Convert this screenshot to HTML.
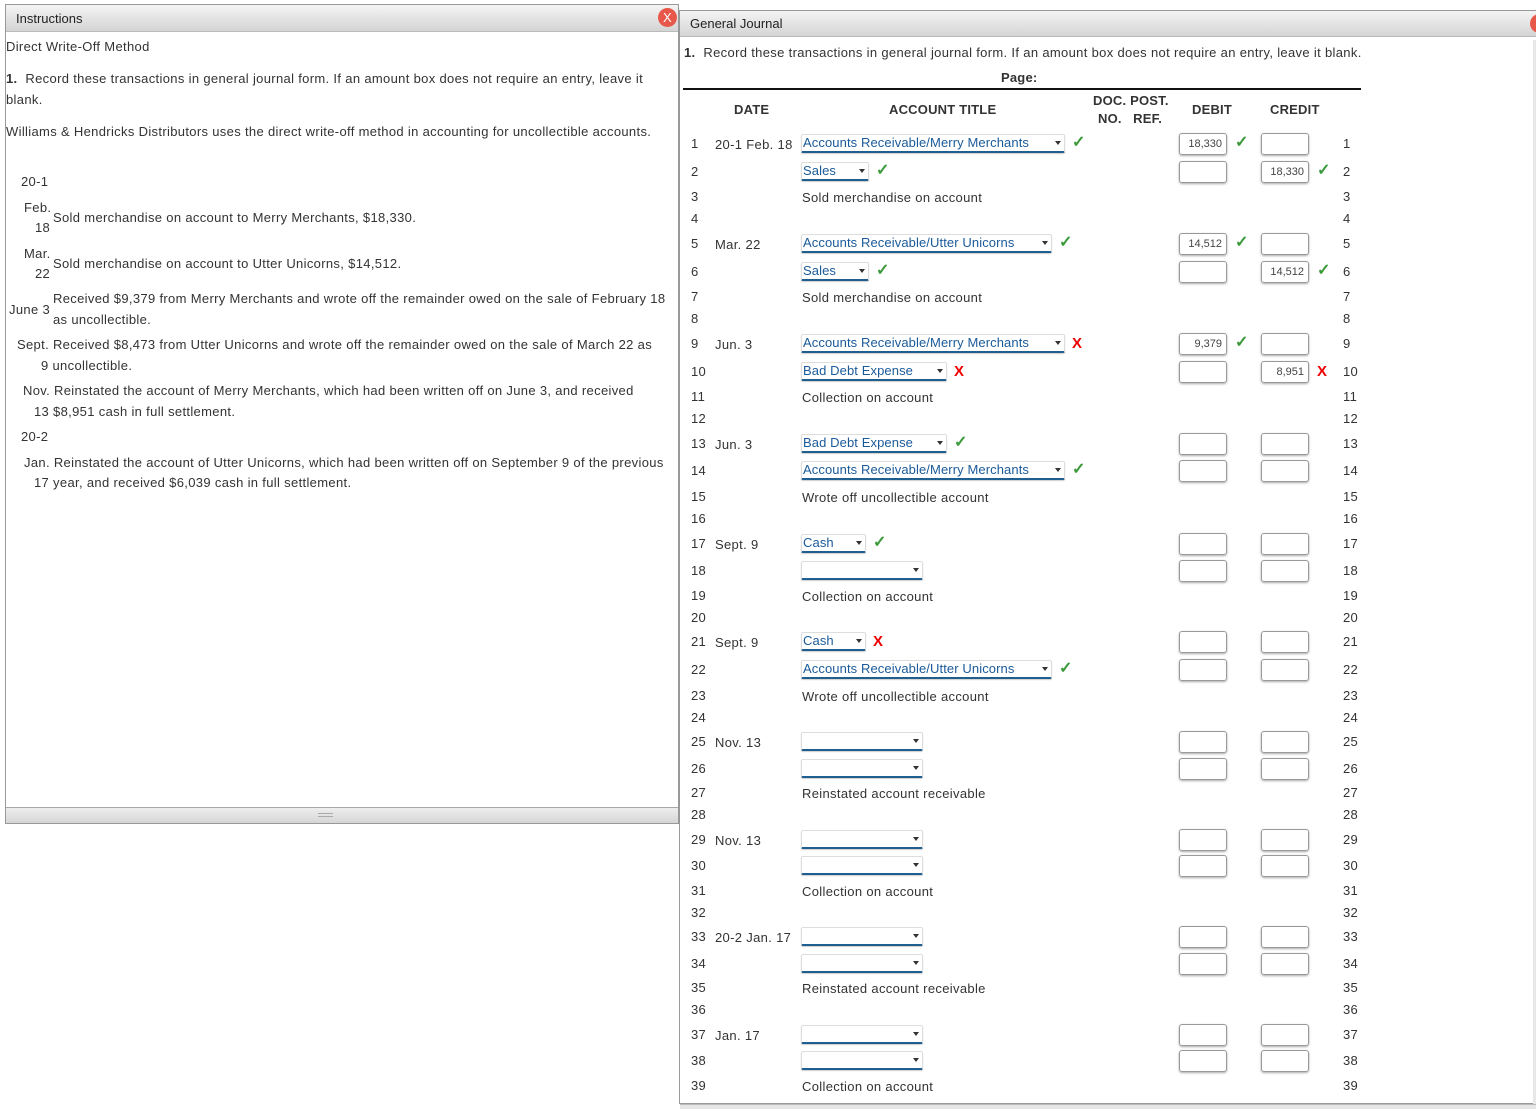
<!DOCTYPE html>
<html><head><meta charset="utf-8"><style>
*{box-sizing:border-box;margin:0;padding:0}
body{width:1536px;height:1109px;background:#fff;position:relative;overflow:hidden;font-family:"Liberation Sans",sans-serif;font-size:13px;color:#333;letter-spacing:0.33px}
.a{position:absolute;white-space:nowrap;line-height:18px}
.hdr{position:absolute;background:linear-gradient(#f4f4f4,#d4d4d4);border-bottom:1px solid #bbb;color:#222;font-size:13px;letter-spacing:0}
.n{position:absolute;left:691px;line-height:18px;top:1px}
.r{position:absolute;left:1343px;line-height:18px}
.d{position:absolute;left:715px;line-height:18px}
.t{position:absolute;left:802px;line-height:18px}
.s{position:absolute;left:801px;height:19px;border:1px solid #ddd;border-bottom:2px solid #1f5f8f;border-radius:2px;color:#1a5a9a;line-height:15px;padding-left:1px;box-shadow:0 1px 1px #ccc;white-space:nowrap;letter-spacing:0.1px}
.s:after{content:"";position:absolute;right:3px;top:6px;border-left:3px solid transparent;border-right:3px solid transparent;border-top:4px solid #333}
.i{position:absolute;width:48px;height:22px;border:1px solid #999;border-radius:3px;box-shadow:0 1px 2px #aaa;font-size:11px;text-align:right;padding-right:4px;line-height:20px;color:#444;letter-spacing:0}
.db{left:1179px}.cr{left:1261px}
.ok{position:absolute;color:#3a9a3a;font-size:16px;font-weight:bold;line-height:18px}
.x{position:absolute;color:#e00;font-size:15px;font-weight:bold;line-height:18px}
.th{position:absolute;font-weight:bold;line-height:18px;color:#333;letter-spacing:0.2px}
</style></head><body>
<div style="position:absolute;left:5px;top:4px;width:674px;height:820px;border:1px solid #999;background:#fff"></div>
<div class="hdr" style="left:6px;top:5px;width:672px;height:27px;padding:6px 10px;line-height:15px">Instructions</div>
<div style="position:absolute;left:658px;top:8px;width:19px;height:19px;border-radius:50%;background:#e8584a;color:#fff;font-size:13px;text-align:center;line-height:19px">X</div>
<div class="hdr" style="left:6px;top:807px;width:672px;height:16px;border-top:1px solid #aaa;border-bottom:none;background:linear-gradient(#eee,#d6d6d6)"></div>
<div style="position:absolute;left:318px;top:813px;width:15px;height:4px;border-top:1px solid #aaa;border-bottom:1px solid #aaa"></div>
<div class="a" style="left:6px;top:38px">Direct Write-Off Method</div>
<div class="a" style="left:6px;top:70px"><b>1.</b>&nbsp; Record these transactions in general journal form. If an amount box does not require an entry, leave it</div>
<div class="a" style="left:6px;top:91px">blank.</div>
<div class="a" style="left:6px;top:123px">Williams &amp; Hendricks Distributors uses the direct write-off method in accounting for uncollectible accounts.</div>
<div class="a" style="left:21px;top:173px">20-1</div>
<div class="a" style="left:24px;top:199px">Feb.</div>
<div class="a" style="left:35px;top:219px">18</div>
<div class="a" style="left:53px;top:209px">Sold merchandise on account to Merry Merchants, $18,330.</div>
<div class="a" style="left:24px;top:245px">Mar.</div>
<div class="a" style="left:35px;top:265px">22</div>
<div class="a" style="left:53px;top:255px">Sold merchandise on account to Utter Unicorns, $14,512.</div>
<div class="a" style="left:9px;top:301px">June 3</div>
<div class="a" style="left:53px;top:290px">Received $9,379 from Merry Merchants and wrote off the remainder owed on the sale of February 18</div>
<div class="a" style="left:53px;top:311px">as uncollectible.</div>
<div class="a" style="left:17px;top:336px">Sept. Received $8,473 from Utter Unicorns and wrote off the remainder owed on the sale of March 22 as</div>
<div class="a" style="left:41px;top:357px">9 uncollectible.</div>
<div class="a" style="left:23px;top:382px">Nov. Reinstated the account of Merry Merchants, which had been written off on June 3, and received</div>
<div class="a" style="left:34px;top:403px">13 $8,951 cash in full settlement.</div>
<div class="a" style="left:21px;top:428px">20-2</div>
<div class="a" style="left:24px;top:454px">Jan. Reinstated the account of Utter Unicorns, which had been written off on September 9 of the previous</div>
<div class="a" style="left:34px;top:474px">17 year, and received $6,039 cash in full settlement.</div>

<div style="position:absolute;left:679px;top:10px;width:860px;height:1094px;border:1px solid #999;background:#fff"></div>
<div class="hdr" style="left:680px;top:11px;width:856px;height:26px;padding:5px 10px;line-height:15px">General Journal</div>
<div style="position:absolute;left:1530px;top:14px;width:19px;height:19px;border-radius:50%;background:#e8584a"></div>
<div style="position:absolute;left:1533px;top:40px;width:3px;height:1064px;background:#e8e8e8"></div>
<div style="position:absolute;left:680px;top:1104px;width:856px;height:5px;background:#e6e6e6;border-top:1px solid #bbb"></div>
<div class="a" style="left:684px;top:44px"><b>1.</b>&nbsp; Record these transactions in general journal form. If an amount box does not require an entry, leave it blank.</div>
<div class="th" style="left:1001px;top:69px">Page:</div>
<div style="position:absolute;left:683px;top:88px;width:678px;height:2px;background:#111"></div>
<div class="th" style="left:734px;top:101px">DATE</div>
<div class="th" style="left:889px;top:101px">ACCOUNT TITLE</div>
<div class="th" style="left:1093px;top:92px">DOC. POST.</div>
<div class="th" style="left:1098px;top:110px">NO.&nbsp;&nbsp; REF.</div>
<div class="th" style="left:1192px;top:101px">DEBIT</div>
<div class="th" style="left:1270px;top:101px">CREDIT</div>

<div class="n" style="top:135px">1</div><div class="r" style="top:135px">1</div>
<div class="n" style="top:163px">2</div><div class="r" style="top:163px">2</div>
<div class="n" style="top:188px">3</div><div class="r" style="top:188px">3</div>
<div class="n" style="top:210px">4</div><div class="r" style="top:210px">4</div>
<div class="n" style="top:235px">5</div><div class="r" style="top:235px">5</div>
<div class="n" style="top:263px">6</div><div class="r" style="top:263px">6</div>
<div class="n" style="top:288px">7</div><div class="r" style="top:288px">7</div>
<div class="n" style="top:310px">8</div><div class="r" style="top:310px">8</div>
<div class="n" style="top:335px">9</div><div class="r" style="top:335px">9</div>
<div class="n" style="top:363px">10</div><div class="r" style="top:363px">10</div>
<div class="n" style="top:388px">11</div><div class="r" style="top:388px">11</div>
<div class="n" style="top:410px">12</div><div class="r" style="top:410px">12</div>
<div class="n" style="top:435px">13</div><div class="r" style="top:435px">13</div>
<div class="n" style="top:462px">14</div><div class="r" style="top:462px">14</div>
<div class="n" style="top:488px">15</div><div class="r" style="top:488px">15</div>
<div class="n" style="top:510px">16</div><div class="r" style="top:510px">16</div>
<div class="n" style="top:535px">17</div><div class="r" style="top:535px">17</div>
<div class="n" style="top:562px">18</div><div class="r" style="top:562px">18</div>
<div class="n" style="top:587px">19</div><div class="r" style="top:587px">19</div>
<div class="n" style="top:609px">20</div><div class="r" style="top:609px">20</div>
<div class="n" style="top:633px">21</div><div class="r" style="top:633px">21</div>
<div class="n" style="top:661px">22</div><div class="r" style="top:661px">22</div>
<div class="n" style="top:687px">23</div><div class="r" style="top:687px">23</div>
<div class="n" style="top:709px">24</div><div class="r" style="top:709px">24</div>
<div class="n" style="top:733px">25</div><div class="r" style="top:733px">25</div>
<div class="n" style="top:760px">26</div><div class="r" style="top:760px">26</div>
<div class="n" style="top:784px">27</div><div class="r" style="top:784px">27</div>
<div class="n" style="top:806px">28</div><div class="r" style="top:806px">28</div>
<div class="n" style="top:831px">29</div><div class="r" style="top:831px">29</div>
<div class="n" style="top:857px">30</div><div class="r" style="top:857px">30</div>
<div class="n" style="top:882px">31</div><div class="r" style="top:882px">31</div>
<div class="n" style="top:904px">32</div><div class="r" style="top:904px">32</div>
<div class="n" style="top:928px">33</div><div class="r" style="top:928px">33</div>
<div class="n" style="top:955px">34</div><div class="r" style="top:955px">34</div>
<div class="n" style="top:979px">35</div><div class="r" style="top:979px">35</div>
<div class="n" style="top:1001px">36</div><div class="r" style="top:1001px">36</div>
<div class="n" style="top:1026px">37</div><div class="r" style="top:1026px">37</div>
<div class="n" style="top:1052px">38</div><div class="r" style="top:1052px">38</div>
<div class="n" style="top:1077px">39</div><div class="r" style="top:1077px">39</div>

<div class="d" style="top:136px">20-1 Feb. 18</div>
<div class="d" style="top:236px">Mar. 22</div>
<div class="d" style="top:336px">Jun. 3</div>
<div class="d" style="top:436px">Jun. 3</div>
<div class="d" style="top:536px">Sept. 9</div>
<div class="d" style="top:634px">Sept. 9</div>
<div class="d" style="top:734px">Nov. 13</div>
<div class="d" style="top:832px">Nov. 13</div>
<div class="d" style="top:929px">20-2 Jan. 17</div>
<div class="d" style="top:1027px">Jan. 17</div>

<div class="t" style="top:189px">Sold merchandise on account</div>
<div class="t" style="top:289px">Sold merchandise on account</div>
<div class="t" style="top:389px">Collection on account</div>
<div class="t" style="top:489px">Wrote off uncollectible account</div>
<div class="t" style="top:588px">Collection on account</div>
<div class="t" style="top:688px">Wrote off uncollectible account</div>
<div class="t" style="top:785px">Reinstated account receivable</div>
<div class="t" style="top:883px">Collection on account</div>
<div class="t" style="top:980px">Reinstated account receivable</div>
<div class="t" style="top:1078px">Collection on account</div>

<div class="s" style="top:134px;width:264px">Accounts Receivable/Merry Merchants</div><div class="ok" style="left:1072px;top:134px">✓</div>
<div class="s" style="top:162px;width:68px">Sales</div><div class="ok" style="left:876px;top:162px">✓</div>
<div class="s" style="top:234px;width:251px">Accounts Receivable/Utter Unicorns</div><div class="ok" style="left:1059px;top:234px">✓</div>
<div class="s" style="top:262px;width:68px">Sales</div><div class="ok" style="left:876px;top:262px">✓</div>
<div class="s" style="top:334px;width:264px">Accounts Receivable/Merry Merchants</div><div class="x" style="left:1072px;top:335px">X</div>
<div class="s" style="top:362px;width:146px">Bad Debt Expense</div><div class="x" style="left:954px;top:363px">X</div>
<div class="s" style="top:434px;width:146px">Bad Debt Expense</div><div class="ok" style="left:954px;top:434px">✓</div>
<div class="s" style="top:461px;width:264px">Accounts Receivable/Merry Merchants</div><div class="ok" style="left:1072px;top:461px">✓</div>
<div class="s" style="top:534px;width:65px">Cash</div><div class="ok" style="left:873px;top:534px">✓</div>
<div class="s" style="top:561px;width:122px"></div>
<div class="s" style="top:632px;width:65px">Cash</div><div class="x" style="left:873px;top:633px">X</div>
<div class="s" style="top:660px;width:251px">Accounts Receivable/Utter Unicorns</div><div class="ok" style="left:1059px;top:660px">✓</div>
<div class="s" style="top:732px;width:122px"></div>
<div class="s" style="top:759px;width:122px"></div>
<div class="s" style="top:830px;width:122px"></div>
<div class="s" style="top:856px;width:122px"></div>
<div class="s" style="top:927px;width:122px"></div>
<div class="s" style="top:954px;width:122px"></div>
<div class="s" style="top:1025px;width:122px"></div>
<div class="s" style="top:1051px;width:122px"></div>

<div class="i db" style="top:133px">18,330</div><div class="ok" style="left:1235px;top:134px">✓</div><div class="i cr" style="top:133px"></div>
<div class="i db" style="top:161px"></div><div class="i cr" style="top:161px">18,330</div><div class="ok" style="left:1317px;top:162px">✓</div>
<div class="i db" style="top:233px">14,512</div><div class="ok" style="left:1235px;top:234px">✓</div><div class="i cr" style="top:233px"></div>
<div class="i db" style="top:261px"></div><div class="i cr" style="top:261px">14,512</div><div class="ok" style="left:1317px;top:262px">✓</div>
<div class="i db" style="top:333px">9,379</div><div class="ok" style="left:1235px;top:334px">✓</div><div class="i cr" style="top:333px"></div>
<div class="i db" style="top:361px"></div><div class="i cr" style="top:361px">8,951</div><div class="x" style="left:1317px;top:363px">X</div>
<div class="i db" style="top:433px"></div><div class="i cr" style="top:433px"></div>
<div class="i db" style="top:460px"></div><div class="i cr" style="top:460px"></div>
<div class="i db" style="top:533px"></div><div class="i cr" style="top:533px"></div>
<div class="i db" style="top:560px"></div><div class="i cr" style="top:560px"></div>
<div class="i db" style="top:631px"></div><div class="i cr" style="top:631px"></div>
<div class="i db" style="top:659px"></div><div class="i cr" style="top:659px"></div>
<div class="i db" style="top:731px"></div><div class="i cr" style="top:731px"></div>
<div class="i db" style="top:758px"></div><div class="i cr" style="top:758px"></div>
<div class="i db" style="top:829px"></div><div class="i cr" style="top:829px"></div>
<div class="i db" style="top:855px"></div><div class="i cr" style="top:855px"></div>
<div class="i db" style="top:926px"></div><div class="i cr" style="top:926px"></div>
<div class="i db" style="top:953px"></div><div class="i cr" style="top:953px"></div>
<div class="i db" style="top:1024px"></div><div class="i cr" style="top:1024px"></div>
<div class="i db" style="top:1050px"></div><div class="i cr" style="top:1050px"></div>
</body></html>
